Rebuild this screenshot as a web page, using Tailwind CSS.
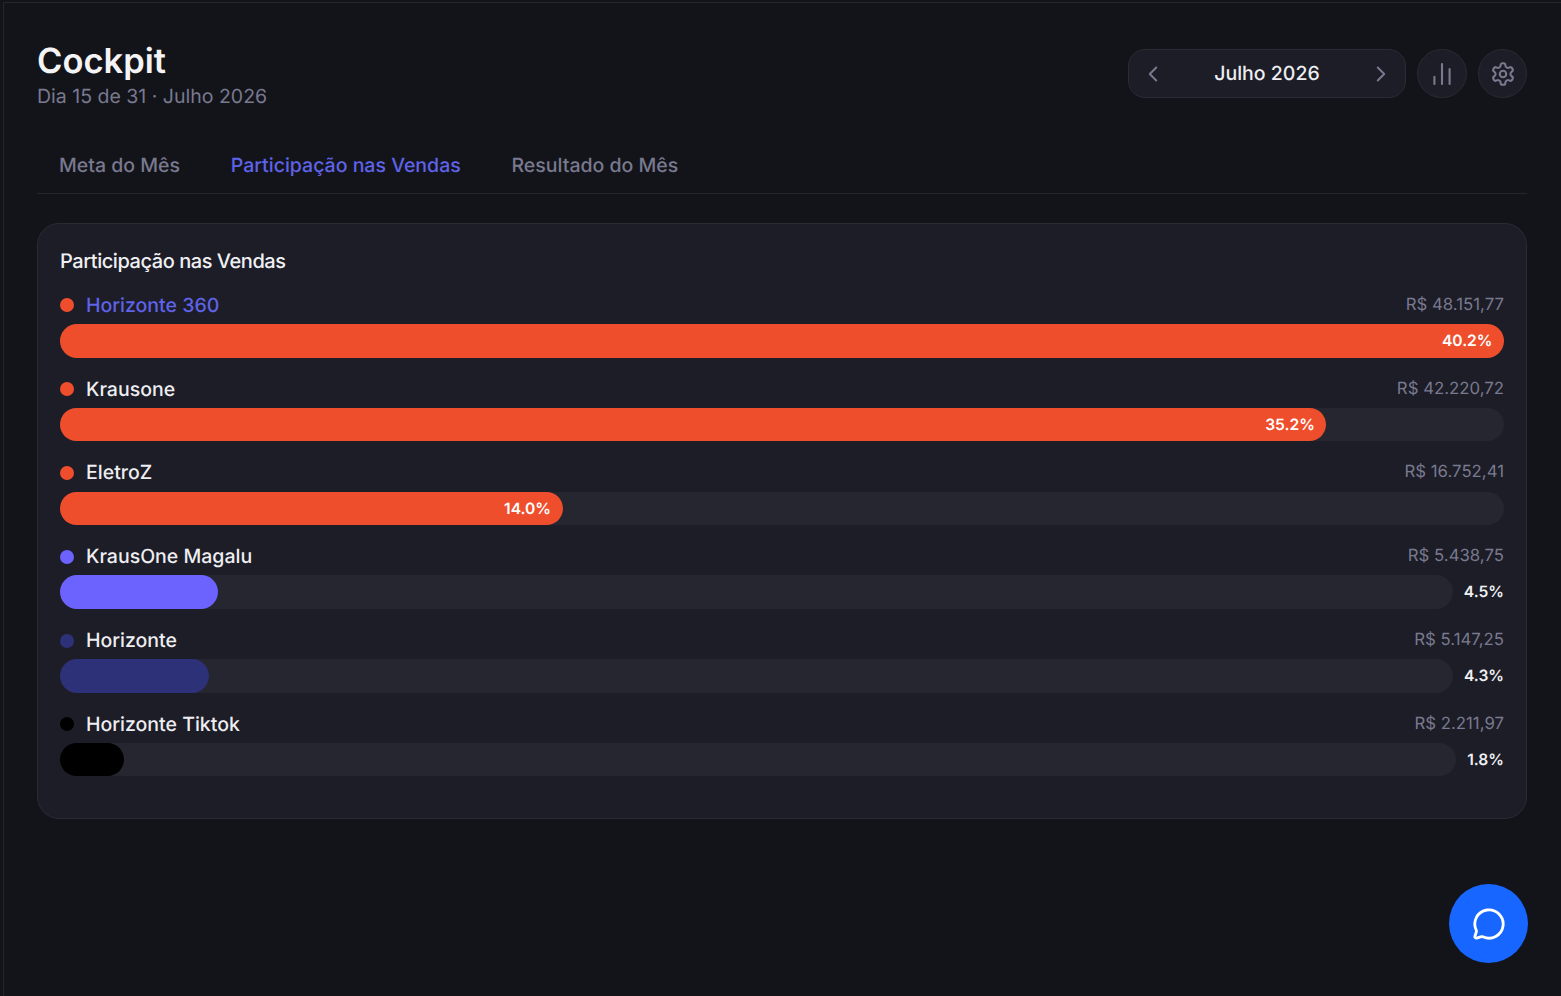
<!DOCTYPE html>
<html lang="pt-BR">
<head>
<meta charset="utf-8">
<script src="https://cdn.jsdelivr.net/npm/@tailwindcss/browser@4"></script>
<title>Cockpit</title>
</head>
<body class="bg-[#13141a] font-['Inter',sans-serif] [text-rendering:geometricPrecision]">
<div class="h-[996px] w-[1561px] overflow-hidden pt-[2px] pl-[3px]">
  <div class="h-full border-t border-l border-[#24252d] pt-[37px] pl-[33px] pr-[34px] relative">
    <header class="flex items-start justify-between">
      <div class="pt-[2px]">
        <h1 class="font-['Inter',sans-serif] text-[34.5px] leading-[40px] font-semibold text-[#f4f4f6]">Cockpit</h1>
        <p class="text-[19.5px] leading-[28px] text-[#79798f]">Dia 15 de 31 · Julho 2026</p>
      </div>
      <div class="flex items-center gap-[11px] mt-[9px]">
        <div class="flex items-center justify-between w-[278px] h-[49px] rounded-[17px] border border-[#2a2b34] bg-[#1c1d26] px-[11px]">
          <svg class="w-[26px] h-[26px] text-[#79798f]" viewBox="0 0 24 24" fill="none" stroke="currentColor" stroke-width="1.8" stroke-linecap="round" stroke-linejoin="round"><path d="m15 18-6-6 6-6"/></svg>
          <span class="text-[19.5px] font-medium text-[#eeeef2]">Julho 2026</span>
          <svg class="w-[26px] h-[26px] text-[#79798f]" viewBox="0 0 24 24" fill="none" stroke="currentColor" stroke-width="1.8" stroke-linecap="round" stroke-linejoin="round"><path d="m9 18 6-6-6-6"/></svg>
        </div>
        <div class="w-[50px] h-[49px] rounded-full border border-[#2a2b34] bg-[#1c1d26] flex items-center justify-center">
          <svg class="w-[28px] h-[28px] text-[#79798f]" viewBox="0 0 24 24" fill="none" stroke="currentColor" stroke-width="1.8" stroke-linecap="round"><path d="M12 20.5V3.5M18.5 20.5V7.7M5.5 20.5v-6"/></svg>
        </div>
        <div class="w-[49px] h-[49px] rounded-full border border-[#2a2b34] bg-[#1c1d26] flex items-center justify-center">
          <svg class="w-[26px] h-[26px] text-[#79798f]" viewBox="0 0 24 24" fill="none" stroke="currentColor" stroke-width="1.9" stroke-linecap="round" stroke-linejoin="round"><path d="M12.22 2h-.44a2 2 0 0 0-2 2v.18a2 2 0 0 1-1 1.73l-.43.25a2 2 0 0 1-2 0l-.15-.08a2 2 0 0 0-2.73.73l-.22.38a2 2 0 0 0 .73 2.73l.15.1a2 2 0 0 1 1 1.72v.51a2 2 0 0 1-1 1.74l-.15.09a2 2 0 0 0-.73 2.73l.22.38a2 2 0 0 0 2.73.73l.15-.08a2 2 0 0 1 2 0l.43.25a2 2 0 0 1 1 1.73V20a2 2 0 0 0 2 2h.44a2 2 0 0 0 2-2v-.18a2 2 0 0 1 1-1.73l.43-.25a2 2 0 0 1 2 0l.15.08a2 2 0 0 0 2.73-.73l.22-.39a2 2 0 0 0-.73-2.73l-.15-.08a2 2 0 0 1-1-1.74v-.5a2 2 0 0 1 1-1.74l.15-.09a2 2 0 0 0 .73-2.73l-.22-.38a2 2 0 0 0-2.73-.73l-.15.08a2 2 0 0 1-2 0l-.43-.25a2 2 0 0 1-1-1.73V4a2 2 0 0 0-2-2z"/><circle cx="12" cy="12" r="3"/></svg>
        </div>
      </div>
    </header>

    <nav class="flex mt-[25px] border-b border-[#24252d] h-[59px] px-[22px] gap-[50.7px] items-start pt-[16px] text-[19.5px] leading-[28px] font-medium text-[#79798f]">
      <span>Meta do Mês</span>
      <span class="text-[#5f63e8]">Participação nas Vendas</span>
      <span>Resultado do Mês</span>
    </nav>

    <section class="mt-[29px] h-[596px] rounded-[22px] border border-[#2a2b34] bg-[#1c1d26] px-[22px] pt-[23px]">
      <h2 class="text-[20px] leading-[28px] font-medium tracking-[-0.45px] text-[#f0f0f4]">Participação nas Vendas</h2>
      <div class="mt-[15.4px] flex flex-col gap-[16.6px]">

        <div>
          <div class="flex items-center justify-between h-[33.6px] pb-[3.4px]">
            <div class="flex items-center gap-[12px]"><span class="w-[14px] h-[14px] rounded-full bg-[#ef4e2d]"></span><span class="text-[19.5px] font-medium text-[#5f63e8]">Horizonte 360</span></div>
            <span class="text-[16.8px] text-[#79798f]">R$ 48.151,77</span>
          </div>
          <div class="h-[33.6px] rounded-[17px] bg-[#25262f]">
            <div class="h-full w-full rounded-[17px] bg-[#ef4e2d] flex items-center justify-end pr-[11.5px] text-[15.6px] font-semibold text-white">40.2%</div>
          </div>
        </div>

        <div>
          <div class="flex items-center justify-between h-[33.6px] pb-[3.4px]">
            <div class="flex items-center gap-[12px]"><span class="w-[14px] h-[14px] rounded-full bg-[#ef4e2d]"></span><span class="text-[19.5px] font-medium text-[#eeeef2]">Krausone</span></div>
            <span class="text-[16.8px] text-[#79798f]">R$ 42.220,72</span>
          </div>
          <div class="h-[33.6px] rounded-[17px] bg-[#25262f]">
            <div class="h-full w-[87.7%] rounded-[17px] bg-[#ef4e2d] flex items-center justify-end pr-[11.5px] text-[15.6px] font-semibold text-white">35.2%</div>
          </div>
        </div>

        <div>
          <div class="flex items-center justify-between h-[33.6px] pb-[3.4px]">
            <div class="flex items-center gap-[12px]"><span class="w-[14px] h-[14px] rounded-full bg-[#ef4e2d]"></span><span class="text-[19.5px] font-medium text-[#eeeef2]">EletroZ</span></div>
            <span class="text-[16.8px] text-[#79798f]">R$ 16.752,41</span>
          </div>
          <div class="h-[33.6px] rounded-[17px] bg-[#25262f]">
            <div class="h-full w-[34.8%] rounded-[17px] bg-[#ef4e2d] flex items-center justify-end pr-[11.5px] text-[15.6px] font-semibold text-white">14.0%</div>
          </div>
        </div>

        <div>
          <div class="flex items-center justify-between h-[33.6px] pb-[3.4px]">
            <div class="flex items-center gap-[12px]"><span class="w-[14px] h-[14px] rounded-full bg-[#6c63ff]"></span><span class="text-[19.5px] font-medium text-[#eeeef2]">KrausOne Magalu</span></div>
            <span class="text-[16.8px] text-[#79798f]">R$ 5.438,75</span>
          </div>
          <div class="flex items-center gap-[11px]">
            <div class="flex-1 h-[33.6px] rounded-[17px] bg-[#25262f]"><div class="h-full w-[158px] rounded-[17px] bg-[#6c63ff]"></div></div>
            <span class="text-[15.6px] font-semibold text-[#f0f0f4]">4.5%</span>
          </div>
        </div>

        <div>
          <div class="flex items-center justify-between h-[33.6px] pb-[3.4px]">
            <div class="flex items-center gap-[12px]"><span class="w-[14px] h-[14px] rounded-full bg-[#2d3178]"></span><span class="text-[19.5px] font-medium text-[#eeeef2]">Horizonte</span></div>
            <span class="text-[16.8px] text-[#79798f]">R$ 5.147,25</span>
          </div>
          <div class="flex items-center gap-[11px]">
            <div class="flex-1 h-[33.6px] rounded-[17px] bg-[#25262f]"><div class="h-full w-[149px] rounded-[17px] bg-[#2d3178]"></div></div>
            <span class="text-[15.6px] font-semibold text-[#f0f0f4]">4.3%</span>
          </div>
        </div>

        <div>
          <div class="flex items-center justify-between h-[33.6px] pb-[3.4px]">
            <div class="flex items-center gap-[12px]"><span class="w-[14px] h-[14px] rounded-full bg-black"></span><span class="text-[19.5px] font-medium text-[#eeeef2]">Horizonte Tiktok</span></div>
            <span class="text-[16.8px] text-[#79798f]">R$ 2.211,97</span>
          </div>
          <div class="flex items-center gap-[11px]">
            <div class="flex-1 h-[33.6px] rounded-[17px] bg-[#25262f]"><div class="h-full w-[64px] rounded-[17px] bg-black"></div></div>
            <span class="text-[15.6px] font-semibold text-[#f0f0f4]">1.8%</span>
          </div>
        </div>

      </div>
    </section>

    <button class="absolute left-[1445px] top-[881px] w-[79px] h-[79px] rounded-full bg-[#1766ff] flex items-center justify-center">
      <svg class="w-[34px] h-[34px] text-white" viewBox="0 0 24 24" fill="none" stroke="currentColor" stroke-width="2" stroke-linecap="round" stroke-linejoin="round"><path d="M2.992 16.342a2 2 0 0 1 .094 1.167l-1.065 3.29a1 1 0 0 0 1.236 1.168l3.413-.998a2 2 0 0 1 1.099.092 10 10 0 1 0-4.777-4.719"/></svg>
    </button>
  </div>
</div>
</body>
</html>
